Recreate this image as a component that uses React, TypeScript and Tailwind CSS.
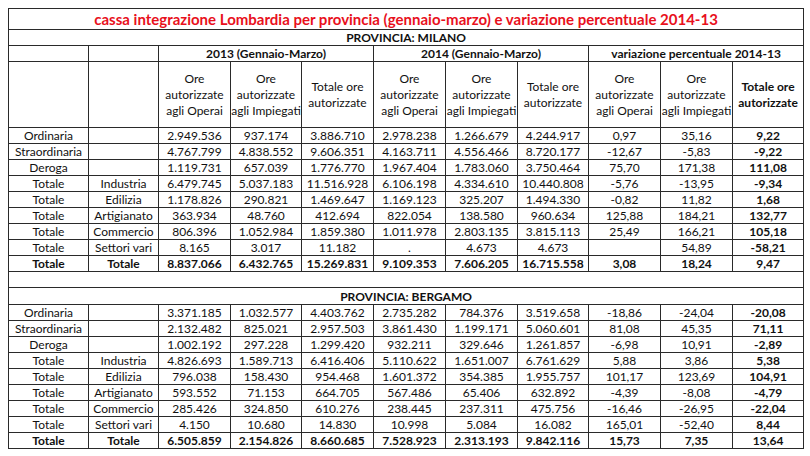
import React from 'react';

type Row = string[];

const milano: Row[] = [
  ['Ordinaria', '', '2.949.536', '937.174', '3.886.710', '2.978.238', '1.266.679', '4.244.917', '0,97', '35,16', '9,22'],
  ['Straordinaria', '', '4.767.799', '4.838.552', '9.606.351', '4.163.711', '4.556.466', '8.720.177', '-12,67', '-5,83', '-9,22'],
  ['Deroga', '', '1.119.731', '657.039', '1.776.770', '1.967.404', '1.783.060', '3.750.464', '75,70', '171,38', '111,08'],
  ['Totale', 'Industria', '6.479.745', '5.037.183', '11.516.928', '6.106.198', '4.334.610', '10.440.808', '-5,76', '-13,95', '-9,34'],
  ['Totale', 'Edilizia', '1.178.826', '290.821', '1.469.647', '1.169.123', '325.207', '1.494.330', '-0,82', '11,82', '1,68'],
  ['Totale', 'Artigianato', '363.934', '48.760', '412.694', '822.054', '138.580', '960.634', '125,88', '184,21', '132,77'],
  ['Totale', 'Commercio', '806.396', '1.052.984', '1.859.380', '1.011.978', '2.803.135', '3.815.113', '25,49', '166,21', '105,18'],
  ['Totale', 'Settori vari', '8.165', '3.017', '11.182', '.', '4.673', '4.673', '', '54,89', '-58,21'],
];
const milanoTot: Row = ['Totale', 'Totale', '8.837.066', '6.432.765', '15.269.831', '9.109.353', '7.606.205', '16.715.558', '3,08', '18,24', '9,47'];

const bergamo: Row[] = [
  ['Ordinaria', '', '3.371.185', '1.032.577', '4.403.762', '2.735.282', '784.376', '3.519.658', '-18,86', '-24,04', '-20,08'],
  ['Straordinaria', '', '2.132.482', '825.021', '2.957.503', '3.861.430', '1.199.171', '5.060.601', '81,08', '45,35', '71,11'],
  ['Deroga', '', '1.002.192', '297.228', '1.299.420', '932.211', '329.646', '1.261.857', '-6,98', '10,91', '-2,89'],
  ['Totale', 'Industria', '4.826.693', '1.589.713', '6.416.406', '5.110.622', '1.651.007', '6.761.629', '5,88', '3,86', '5,38'],
  ['Totale', 'Edilizia', '796.038', '158.430', '954.468', '1.601.372', '354.385', '1.955.757', '101,17', '123,69', '104,91'],
  ['Totale', 'Artigianato', '593.552', '71.153', '664.705', '567.486', '65.406', '632.892', '-4,39', '-8,08', '-4,79'],
  ['Totale', 'Commercio', '285.426', '324.850', '610.276', '238.445', '237.311', '475.756', '-16,46', '-26,95', '-22,04'],
  ['Totale', 'Settori vari', '4.150', '10.680', '14.830', '10.998', '5.084', '16.082', '165,01', '-52,40', '8,44'],
];
const bergamoTot: Row = ['Totale', 'Totale', '6.505.859', '2.154.826', '8.660.685', '7.528.923', '2.313.193', '9.842.116', '15,73', '7,35', '13,64'];

const widths = [80, 70, 72, 71, 72, 72, 72, 71, 72, 72, 71];

const cell = 'border border-[#2a2a2a] text-center p-0 align-middle whitespace-nowrap';

function DataRow({ row, bold }: { row: Row; bold?: boolean }) {
  return (
    <tr className="h-[16px]">
      {row.map((v, i) => (
        <td key={i} className={`${cell} ${bold || i === 10 ? 'font-bold' : ''}`}>
          {v}
        </td>
      ))}
    </tr>
  );
}

function SubHead({ text, bold }: { text: React.ReactNode; bold?: boolean }) {
  return <td className={`${cell} whitespace-normal leading-[16px] ${bold ? 'font-bold' : ''}`}>{text}</td>;
}

export default function App() {
  return (
    <div className="w-[810px] h-[456px] bg-white pt-[8px] pl-[8px] font-['Lato',sans-serif] text-[12px] leading-[15px] text-[#111]">
      <table className="table-fixed border-collapse w-[795px] border border-[#555]">
        <colgroup>
          {widths.map((w, i) => (
            <col key={i} style={{ width: w }} />
          ))}
        </colgroup>
        <tbody>
          {/* titolo */}
          <tr className="h-[21px]">
            <td colSpan={11} className={`${cell} text-[15px] font-bold text-[#e8101c]`}>
              cassa integrazione Lombardia per provincia (gennaio-marzo) e variazione percentuale 2014-13
            </td>
          </tr>
          <tr className="h-[16px]">
            <td colSpan={11} className={`${cell} font-bold`}>PROVINCIA: MILANO</td>
          </tr>
          <tr className="h-[16px]">
            <td className={cell}></td>
            <td className={cell}></td>
            <td colSpan={3} className={`${cell} font-bold`}>2013 (Gennaio-Marzo)</td>
            <td colSpan={3} className={`${cell} font-bold`}>2014 (Gennaio-Marzo)</td>
            <td colSpan={3} className={`${cell} font-bold`}>variazione percentuale 2014-13</td>
          </tr>
          <tr className="h-[66px]">
            <td className={cell}></td>
            <td className={cell}></td>
            <SubHead text={<>Ore<br />autorizzate<br />agli Operai</>} />
            <SubHead text={<>Ore<br />autorizzate<br />agli Impiegati</>} />
            <SubHead text={<>Totale ore<br />autorizzate</>} />
            <SubHead text={<>Ore<br />autorizzate<br />agli Operai</>} />
            <SubHead text={<>Ore<br />autorizzate<br />agli Impiegati</>} />
            <SubHead text={<>Totale ore<br />autorizzate</>} />
            <SubHead text={<>Ore<br />autorizzate<br />agli Operai</>} />
            <SubHead text={<>Ore<br />autorizzate<br />agli Impiegati</>} />
            <SubHead bold text={<>Totale ore<br />autorizzate</>} />
          </tr>
          {milano.map((r, i) => (
            <DataRow key={i} row={r} />
          ))}
          <DataRow row={milanoTot} bold />

          {/* riga vuota */}
          <tr className="h-[16px]">
            <td colSpan={11} className={cell}></td>
          </tr>
          <tr className="h-[17px]">
            <td colSpan={11} className={`${cell} font-bold`}>PROVINCIA: BERGAMO</td>
          </tr>
          {bergamo.map((r, i) => (
            <DataRow key={i} row={r} />
          ))}
          <DataRow row={bergamoTot} bold />
        </tbody>
      </table>
    </div>
  );
}
